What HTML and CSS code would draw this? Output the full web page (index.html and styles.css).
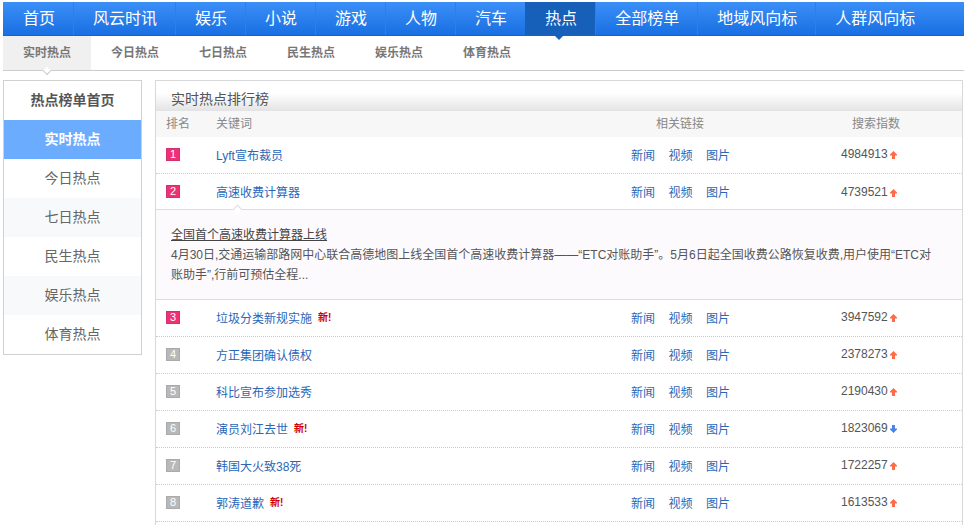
FILE: index.html
```html
<!DOCTYPE html>
<html lang="zh-CN">
    <head>
        <meta charset="utf-8" />
        <title>实时热点排行榜</title>
        <link rel="stylesheet" href="styles.css">
    </head>
    <body>
        <div class="nav">
            <a class="navItem">首页</a>
            <a class="navItem">风云时讯</a>
            <a class="navItem">娱乐</a>
            <a class="navItem">小说</a>
            <a class="navItem">游戏</a>
            <a class="navItem">人物</a>
            <a class="navItem">汽车</a>
            <a class="navItem navActive">热点</a>
            <a class="navItem">全部榜单</a>
            <a class="navItem">地域风向标</a>
            <a class="navItem">人群风向标</a>
        </div>
        <div class="subNav">
            <a class="subItem subActive">实时热点</a>
            <a class="subItem">今日热点</a>
            <a class="subItem">七日热点</a>
            <a class="subItem">民生热点</a>
            <a class="subItem">娱乐热点</a>
            <a class="subItem">体育热点</a>
        </div>
        <div class="content">
            <div class="side">
                <div class="sideTitle">热点榜单首页</div>
                <a class="sideItem sideActive">实时热点</a>
                <a class="sideItem">今日热点</a>
                <a class="sideItem sideAlt">七日热点</a>
                <a class="sideItem">民生热点</a>
                <a class="sideItem sideAlt">娱乐热点</a>
                <a class="sideItem">体育热点</a>
            </div>
            <div class="main">
                <div class="mainTitle">实时热点排行榜</div>
                <div class="row headRow">
                    <span>排名</span>
                    <span>关键词</span>
                    <span class="headLinks">相关链接</span>
                    <span class="headIndex">搜索指数</span>
                </div>

                <div class="row">
                    <span class="rank rankHot">1</span>
                    <a class="keyword">Lyft宣布裁员</a>
                    <span class="links"><a>新闻</a><a>视频</a><a>图片</a></span>
                    <span class="index">4984913<svg class="arrow" viewBox="0 0 7 8"><path d="M3.5 0 L7 3.5 V4.5 H5 V8 H2 V4.5 H0 V3.5 Z" fill="#ff6a48"/></svg></span>
                </div>
                <div class="row rowOpen">
                    <span class="rank rankHot">2</span>
                    <a class="keyword">高速收费计算器</a>
                    <span class="links"><a>新闻</a><a>视频</a><a>图片</a></span>
                    <span class="index">4739521<svg class="arrow" viewBox="0 0 7 8"><path d="M3.5 0 L7 3.5 V4.5 H5 V8 H2 V4.5 H0 V3.5 Z" fill="#ff6a48"/></svg></span>
                </div>
                <div class="detail">
                    <a class="detailTitle">全国首个高速收费计算器上线</a>
                    <p class="detailText">4月30日,交通运输部路网中心联合高德地图上线全国首个高速收费计算器——“ETC对账助手”。5月6日起全国收费公路恢复收费,用户使用“ETC对<br>账助手”,行前可预估全程...</p>
                </div>
                <div class="row">
                    <span class="rank rankHot">3</span>
                    <span><a class="keyword">垃圾分类新规实施</a><span class="isNew">新!</span></span>
                    <span class="links"><a>新闻</a><a>视频</a><a>图片</a></span>
                    <span class="index">3947592<svg class="arrow" viewBox="0 0 7 8"><path d="M3.5 0 L7 3.5 V4.5 H5 V8 H2 V4.5 H0 V3.5 Z" fill="#ff6a48"/></svg></span>
                </div>
                <div class="row">
                    <span class="rank">4</span>
                    <a class="keyword">方正集团确认债权</a>
                    <span class="links"><a>新闻</a><a>视频</a><a>图片</a></span>
                    <span class="index">2378273<svg class="arrow" viewBox="0 0 7 8"><path d="M3.5 0 L7 3.5 V4.5 H5 V8 H2 V4.5 H0 V3.5 Z" fill="#ff6a48"/></svg></span>
                </div>
                <div class="row">
                    <span class="rank">5</span>
                    <a class="keyword">科比宣布参加选秀</a>
                    <span class="links"><a>新闻</a><a>视频</a><a>图片</a></span>
                    <span class="index">2190430<svg class="arrow" viewBox="0 0 7 8"><path d="M3.5 0 L7 3.5 V4.5 H5 V8 H2 V4.5 H0 V3.5 Z" fill="#ff6a48"/></svg></span>
                </div>
                <div class="row">
                    <span class="rank">6</span>
                    <span><a class="keyword">演员刘江去世</a><span class="isNew">新!</span></span>
                    <span class="links"><a>新闻</a><a>视频</a><a>图片</a></span>
                    <span class="index">1823069<svg class="arrow" viewBox="0 0 7 8"><path d="M3.5 8 L7 4.5 V3.5 H5 V0 H2 V3.5 H0 V4.5 Z" fill="#4d82e8"/></svg></span>
                </div>
                <div class="row">
                    <span class="rank">7</span>
                    <a class="keyword">韩国大火致38死</a>
                    <span class="links"><a>新闻</a><a>视频</a><a>图片</a></span>
                    <span class="index">1722257<svg class="arrow" viewBox="0 0 7 8"><path d="M3.5 0 L7 3.5 V4.5 H5 V8 H2 V4.5 H0 V3.5 Z" fill="#ff6a48"/></svg></span>
                </div>
                <div class="row">
                    <span class="rank">8</span>
                    <span><a class="keyword">郭涛道歉</a><span class="isNew">新!</span></span>
                    <span class="links"><a>新闻</a><a>视频</a><a>图片</a></span>
                    <span class="index">1613533<svg class="arrow" viewBox="0 0 7 8"><path d="M3.5 0 L7 3.5 V4.5 H5 V8 H2 V4.5 H0 V3.5 Z" fill="#ff6a48"/></svg></span>
                </div>
            </div>
        </div>
    </body>
</html>
```

FILE: styles.css
```css
html, body {
    overflow: hidden;
}

body {
    margin: 0;
    padding: 2px 3px 0;
    font-family: "Liberation Sans", "Noto Sans CJK SC", sans-serif;
    font-size: 12px;
    color: #555;
    background-color: #fff;
}

.nav {
    display: flex;
    height: 33px;
    background: linear-gradient(#3b8ff7, #1a6fe2);
    border-bottom: 1px solid #1464cc;
}

.navItem {
    position: relative;
    padding: 0 18px 0 19px;
    border-right: 1px solid #2f7fe6;
    font-size: 16px;
    line-height: 33px;
    color: #fff;
}

.navItem:first-child {
    padding-left: 20px;
}

.navItem:last-child {
    border-right: 0;
}

.navActive {
    margin-left: -1px;
    padding-left: 20px;
    background: #1660ba;
}

.navActive::after {
    content: "";
    position: absolute;
    left: 29px;
    top: 33px;
    border-style: solid;
    border-width: 5px 5px 0;
    border-color: #1660ba transparent transparent;
}

.subNav {
    display: flex;
    height: 34px;
    border-bottom: 1px solid #ccc;
}

.subItem {
    position: relative;
    width: 88px;
    text-align: center;
    line-height: 35px;
    font-weight: bold;
    color: #777;
}

.subActive {
    background-color: #f0f0f0;
}

.subActive::after {
    content: "";
    position: absolute;
    left: 41px;
    bottom: -4px;
    width: 5px;
    height: 5px;
    background-color: #fff;
    border-right: 1px solid #ccc;
    border-bottom: 1px solid #ccc;
    transform: rotate(45deg);
}

.content {
    display: flex;
    align-items: flex-start;
    gap: 13px;
    margin-top: 9px;
}

.side {
    width: 137px;
    border: 1px solid #d0d0d0;
}

.sideTitle {
    height: 39px;
    line-height: 38px;
    text-align: center;
    font-size: 14px;
    font-weight: bold;
    color: #555;
}

.sideItem {
    display: block;
    height: 39px;
    line-height: 38px;
    text-align: center;
    font-size: 14px;
    color: #666;
}

.sideActive {
    background-color: #6cacff;
    color: #fff;
    font-weight: bold;
}

.sideAlt {
    background-color: #f8f9fb;
}

.main {
    width: 806px;
    padding-bottom: 40px;
    border: 1px solid #d8d8d8;
}

.mainTitle {
    height: 30px;
    padding-left: 15px;
    line-height: 37px;
    font-size: 14px;
    color: #555;
    background: linear-gradient(#fff 40%, #e3e3e5);
}

.row {
    display: grid;
    grid-template-columns: 50px 415px 210px 1fr;
    align-items: center;
    height: 34px;
    padding: 0 0 2px 10px;
    border-bottom: 1px dotted #ccc;
}

.headRow {
    height: 22px;
    padding-bottom: 4px;
    background-color: #f7f7f7;
    border-bottom: 0;
    color: #888;
}

.headLinks {
    padding-left: 25px;
}

.headIndex {
    padding-left: 11px;
}

.rowOpen {
    position: relative;
    height: 35px;
    padding-bottom: 0;
    border-bottom: 1px solid #ddd;
}

.rowOpen::after {
    content: "";
    position: absolute;
    left: 78px;
    bottom: -4px;
    width: 6px;
    height: 6px;
    background-color: #fff;
    border-right: 1px solid #ddd;
    border-bottom: 1px solid #ddd;
    transform: rotate(225deg);
}

.rank {
    width: 12px;
    height: 11px;
    border: 1px solid #aaa;
    background-color: #b8b8b8;
    text-align: center;
    line-height: 11px;
    font-size: 11px;
    color: #fff;
}

.rankHot {
    background-color: #ee3074;
    border-color: #d0336e;
}

.keyword,
.links a {
    color: #2a67b8;
}

.isNew {
    position: relative;
    top: -2px;
    margin-left: 6px;
    font-size: 10px;
    font-weight: bold;
    color: #c00;
}

.links {
    display: flex;
    gap: 13.5px;
}

.index {
    display: flex;
    align-items: center;
    gap: 2px;
    color: #555;
}

.arrow {
    width: 7px;
    height: 8px;
    margin-top: 2px;
}

.detail {
    height: 90px;
    padding: 15px 15px 0;
    box-sizing: border-box;
    background-color: #fdfafe;
    border-bottom: 1px solid #ddd;
}

.detailTitle {
    display: block;
    line-height: 20px;
    text-decoration: underline;
    color: #444;
}

.detailText {
    margin: 0;
    line-height: 20px;
    color: #555;
}
```
